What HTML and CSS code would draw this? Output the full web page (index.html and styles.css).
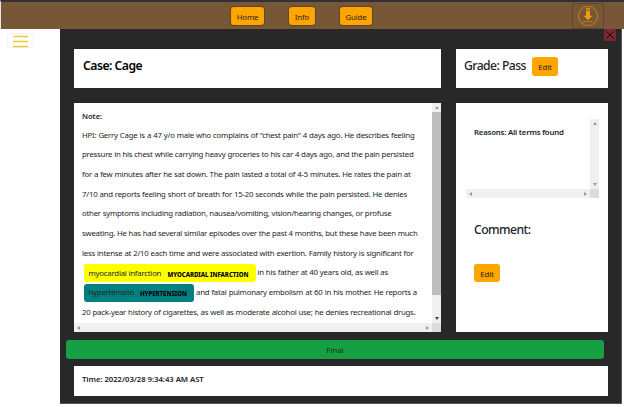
FILE: index.html
```html
<!DOCTYPE html>
<html lang="en">
<head>
<meta charset="utf-8">
<title>Case: Cage</title>
<link rel="stylesheet" href="styles.css">
</head>
<body>
<header class="navbar">
  <nav class="links">
    <button class="btn home">Home</button>
    <button class="btn info">Info</button>
    <button class="btn guide">Guide</button>
  </nav>
  <button class="download" aria-label="Download">
    <svg width="22" height="22" viewBox="0 0 22 22">
      <circle cx="11" cy="11" r="9.6" fill="none" stroke="#d98c1d" stroke-width=".8"/>
      <path d="M9 3.5h4M9 5.2h4" stroke="#e8951a" stroke-width="1"/>
      <path d="M9 6.3h4v4.5h2.3L11 15.3 6.7 10.8H9z" fill="#f39b14"/>
      <path d="M6 16.7h10" stroke="#d98c1d" stroke-width="1" stroke-dasharray="1.5 .5"/>
    </svg>
  </button>
</header>
<div class="page">
  <aside class="side">
    <button class="menu" aria-label="Menu">
      <svg width="15" height="13" viewBox="0 0 15 13"><path d="M0 1.5h15M0 6.5h15M0 11.5h15" stroke="#efcb32" stroke-width="1.7"/></svg>
    </button>
  </aside>
  <main class="panel">
    <button class="close" aria-label="Close">
      <svg width="12" height="12" viewBox="0 0 12 12"><path d="M2.2 2.2l7.6 7.6M9.8 2.2L2.2 9.8" stroke="#16090b" stroke-width="1"/></svg>
    </button>
    <div class="cards">
      <section class="card case"><h1>Case: Cage</h1></section>
      <section class="card grade"><h2>Grade: Pass</h2><button class="btn edit">Edit</button></section>
      <section class="card note">
        <div class="note-text">
          <h3>Note:</h3>
          <p class="w1">HPI: Gerry Cage is a 47 y/o male who complains of "chest pain" 4 days ago. He describes feeling</p>
          <p class="w2">pressure in his chest while carrying heavy groceries to his car 4 days ago, and the pain persisted</p>
          <p class="w3">for a few minutes after he sat down. The pain lasted a total of 4-5 minutes. He rates the pain at</p>
          <p class="w4">7/10 and reports feeling short of breath for 15-20 seconds while the pain persisted. He denies</p>
          <p class="w5">other symptoms including radiation, nausea/vomiting, vision/hearing changes, or profuse</p>
          <p class="w6">sweating. He has had several similar episodes over the past 4 months, but these have been much</p>
          <p class="w7">less intense at 2/10 each time and were associated with exertion. Family history is significant for</p>
          <p class="tagged"><mark class="mi"><span>myocardial infarction</span><b>MYOCARDIAL INFARCTION</b></mark><span class="w8">in his father at 40 years old, as well as</span></p>
          <p class="tagged"><mark class="ht"><span>hypertension</span><b>HYPERTENSION</b></mark><span class="w9">and fatal pulmonary embolism at 60 in his mother. He reports a</span></p>
          <p class="w10">20 pack-year history of cigarettes, as well as moderate alcohol use; he denies recreational drugs.</p>
        </div>
        <div class="vbar dark"><i class="up"></i><span class="thumb"></span><i class="down"></i></div>
        <div class="hbar"><i class="left"></i><i class="right"></i></div>
        <div class="corner"></div>
      </section>
      <section class="card review">
        <div class="reasons">
          <p>Reasons: All terms found</p>
          <div class="vbar"><i class="up"></i><i class="down"></i></div>
          <div class="hbar"><i class="left"></i><i class="right"></i></div>
          <div class="corner"></div>
        </div>
        <h2>Comment:</h2>
        <button class="btn edit">Edit</button>
      </section>
    </div>
    <button class="final">Final</button>
    <section class="card time">Time: 2022/03/28 9:34:43 AM AST</section>
  </main>
</div>
</body>
</html>
```
FILE: styles.css
```css
* { box-sizing: border-box; }
body {
  margin: 0;
  height: 407px;
  overflow: hidden;
  background: #fff;
  color: #212529;
  font-family: "Noto Sans", "Open Sans", sans-serif;
  font-size: 7.8px;
}
h1, h2, h3, p { margin: 0; white-space: nowrap; }
button { font: inherit; border: 0; padding: 0; }
.navbar {
  height: 29px;
  border-top: 2px solid #303036;
  border-left: 1px solid #e8e4df;
  background: #775735;
  display: flex;
  justify-content: space-between;
}
.links { display: flex; gap: 25px; margin: 5px 0 0 230px; }
.btn { height: 18px; padding-top: 1px; background: #ffa500; color: #2b2113; border-radius: 3px; letter-spacing: -.15px; }
.links .btn { box-shadow: 0 0 0 .7px #59401f; }
.home { width: 33px; }
.info { width: 26px; }
.guide { width: 32px; }
.download {
  width: 32px;
  height: 26px;
  margin: 1px 20px 0 0;
  border: 1px solid #5c4934;
  background: none;
  display: grid;
  place-items: center;
}
.page { display: flex; height: 375px; }
.side { width: 60px; padding: 4px 0 0 7px; }
.menu {
  width: 27px;
  height: 15px;
  background: #fff;
  border: 1px solid #f2f2f2;
  border-radius: 2px;
  display: grid;
  place-items: center;
}
.menu svg { display: block; margin-top: 1px; }
.panel {
  position: relative;
  width: 562px;
  background: #282828;
  border-right: 1px solid #555;
  border-bottom: 1px solid #555;
  padding: 20px 0 0 14px;
}
.close {
  position: absolute;
  right: 5px;
  top: 0;
  width: 12px;
  height: 12px;
  background: #7c2932;
  border-radius: 2px;
}
.close svg { display: block; }
.cards {
  display: grid;
  grid-template-columns: 367px 152px;
  grid-template-rows: 39px 229px;
  gap: 15px;
}
.card { background: #fff; }
h1 { font-size: 12.2px; line-height: 16px; font-weight: 600; color: #000; letter-spacing: -.5px; }
h2 { font-size: 12.2px; line-height: 16px; font-weight: 500; letter-spacing: -.55px; }
.case { padding: 8.5px 9px; }
.grade { display: flex; padding: 8px; }
.edit { width: 26px; height: 19px; }
.grade h2 { width: 61px; padding-top: 1px; }
.grade .edit { margin-left: 7px; }
.note {
  display: grid;
  grid-template-columns: 1fr 9px;
  grid-template-rows: 1fr 9px;
}
.note-text { padding: 6px 0 0 8px; overflow: hidden; letter-spacing: -.225px; }
.note-text h3 { font-size: 7.6px; line-height: 15px; font-weight: 600; margin-bottom: 1.5px; letter-spacing: -.05px; }
.note-text p { height: 19.7px; line-height: 19.7px; text-align-last: justify; }
.w1 { width: 332.5px; }
.w2 { width: 331.5px; }
.w3 { width: 328.5px; }
.w4 { width: 325px; }
.w5 { width: 309.5px; }
.w6 { width: 335.5px; }
.w7 { width: 331.5px; }
.w8 { width: 130.5px; }
.w9 { width: 221px; }
.w10 { width: 333.5px; }
.tagged { display: flex; align-items: center; }
.tagged mark {
  display: flex;
  align-items: center;
  justify-content: space-between;
  height: 17.5px;
  line-height: 17px;
  margin: 0 2px 0 1.5px;
  padding: 0 7px 0 5px;
  border-radius: 3px;
  color: #212529;
}
.tagged b { font-size: 6.1px; font-weight: 800; color: #000; padding-top: 2px; letter-spacing: -.05px; }
.mi { width: 172px; background: #ff0; }
.ht { width: 110.5px; background: #008080; }
.vbar {
  background: #f0f0f0;
  display: flex;
  flex-direction: column;
  align-items: center;
  justify-content: space-between;
  padding: 3px 0;
}
.hbar {
  background: #f0f0f0;
  display: flex;
  align-items: center;
  justify-content: space-between;
  padding: 0 3px;
}
.corner { background: #dcdcdc; }
.thumb { width: 9px; flex: 1; margin: 3px 0 22px; background: #bdbdbd; }
.dark .thumb { margin-bottom: 22px; }
.up, .down { border: 2px solid transparent; border-top-width: 0; border-bottom: 3px solid #999; }
.down { transform: rotate(180deg); }
.dark .down { border-bottom-color: #444; }
.left, .right { border: 2px solid transparent; border-left-width: 0; border-right: 3px solid #999; }
.right { transform: rotate(180deg); }
.review { padding: 16px 9px 0 10px; }
.reasons {
  display: grid;
  grid-template-columns: 1fr 9px;
  grid-template-rows: 70px 9px;
}
.reasons p { padding: 7px 0 0 8px; line-height: 12px; font-weight: 600; letter-spacing: -.2px; }
.review h2 { margin: 24px 0 0 8px; letter-spacing: -.55px; }
.review .edit { display: block; margin: 26px 0 0 8px; height: 18px; }
.final {
  display: block;
  width: 538px;
  height: 19px;
  margin: 8px 0 7px -8px;
  padding-top: 1px;
  border-radius: 3px;
  background: #15a043;
  color: #17301d;
}
.time { width: 534px; height: 30px; padding: 7px 8px; line-height: 12px; font-weight: 600; letter-spacing: -.07px; }
```
